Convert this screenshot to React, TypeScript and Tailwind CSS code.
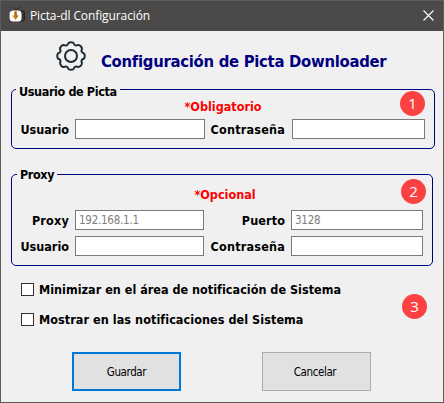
import type { ReactNode } from "react";

const tahoma = "font-['DejaVu_Sans_Condensed','DejaVu_Sans',sans-serif]";

function AppIcon() {
  return (
    <svg width="16" height="16" viewBox="0 0 16 16" className="-mt-1 shrink-0">
      <path d="M4 1 7.3 4 11 .7" fill="none" stroke="#292929" strokeWidth="1" />
      <rect x="1" y="4.5" width="15" height="11" rx="2" fill="#242424" />
      <rect x=".6" y="4.5" width="12" height="11" rx="3.5" fill="#fff" />
      <path d="M5 5.5h3v4h2l-3.5 4.5L3 9.5h2z" fill="#d99a31" />
      <path d="M6 5.5h1.5v4H9L6.5 13z" fill="#b65420" />
      <path d="M14 6.500v1M14 9.500v1M14 12.500v1" stroke="#777" />
    </svg>
  );
}

function Gear() {
  return (
    <svg width="30" height="30" viewBox="-15 -15 30 30" fill="none" stroke="#1e2b35" strokeWidth="2" strokeLinejoin="round" className="shrink-0">
      <circle r="6" />
      <path d="M-3-12.2Q-2.5-13.8 0-13.8T3-12.2Q4-9.7 6.5-10.8Q8.2-11.5 9.8-9.8T10.8-6.5Q9.7-4 12.2-3Q13.8-2.5 13.8 0T12.2 3Q9.7 4 10.8 6.5Q11.5 8.2 9.8 9.8T6.5 10.8Q4 9.7 3 12.2Q2.5 13.8 0 13.8T-3 12.2Q-4 9.7-6.5 10.8Q-8.2 11.5-9.8 9.8T-10.8 6.5Q-9.7 4-12.2 3Q-13.8 2.5-13.8 0T-12.2-3Q-9.7-4-10.8-6.5Q-11.5-8.2-9.8-9.8T-6.5-10.8Q-4-9.7-3-12.2Z" />
    </svg>
  );
}

function Badge({ children, className }: { children: ReactNode; className: string }) {
  return (
    <span className={`absolute flex size-[25px] items-center justify-center rounded-full bg-[#fb4141] font-['Open_Sans',sans-serif] text-[15px] font-normal leading-none text-white ${className}`}>
      {children}
    </span>
  );
}

function Field({ label, placeholder, labelClass, width }: { label: string; placeholder?: string; labelClass: string; width: string }) {
  return (
    <label className="flex items-center gap-1.5">
      <span className={`mt-px flex justify-end whitespace-nowrap ${labelClass}`}>{label}</span>
      <input
        placeholder={placeholder}
        className={`h-5 border border-[#7a7a7a] bg-white px-[3px] text-[11.5px] font-normal tracking-[-0.25px] outline-none placeholder:text-[#808080] ${width}`}
      />
    </label>
  );
}

function Check({ label, tracking }: { label: string; tracking: string }) {
  return (
    <label className="flex h-[30px] items-center gap-[5px]">
      <input type="checkbox" className="size-[13px] appearance-none border border-[#333] bg-white" />
      <span className={`mt-0.5 whitespace-nowrap ${tracking}`}>{label}</span>
    </label>
  );
}

export default function App() {
  return (
    <div className={`relative flex h-[403px] w-[444px] flex-col overflow-hidden border border-[#5d5c5b] bg-[#f0f0f0] text-[12.5px] font-bold leading-4 text-black ${tahoma}`}>
      <header className="flex h-[30px] shrink-0 items-center bg-[#4b4a48] pl-2 pr-[9px] font-['Open_Sans',sans-serif] text-[12px] font-normal text-white">
        <AppIcon />
        <span className="ml-[5px] grow tracking-[-0.1px]">Picta-dl Configuración</span>
        <svg width="11" height="11" viewBox="0 0 11 11" stroke="#fff" strokeWidth="1.1" className="-mt-0.5">
          <path d="m.5.5 10 10m0-10-10 10" />
        </svg>
      </header>

      <div className="flex h-[51px] shrink-0 items-start pl-[55px] pt-[10px]">
        <Gear />
        <h1 className="ml-[15px] mt-[11px] whitespace-nowrap text-[16.5px] leading-5 tracking-[-0.28px] text-[#000080]">Configuración de Picta Downloader</h1>
      </div>

      <fieldset className="ml-[10px] h-[67px] w-[424px] shrink-0 rounded-[5px] border border-[#000080] pl-[9px]">
        <legend className="-ml-[5px] h-[15px] px-[3px] pt-[2px] leading-[15px] tracking-[-0.38px]">Usuario de Picta</legend>
        <p className="mt-0.5 w-[404px] text-center text-[#ff0000]">*Obligatorio</p>
        <div className="mt-1 flex gap-1.5">
          <Field label="Usuario" labelClass="w-[48px]" width="w-[130px]" />
          <Field label="Contraseña" labelClass="w-[74px] mr-px tracking-[0.2px]" width="w-[133px]" />
        </div>
      </fieldset>

      <fieldset className="ml-[10px] mt-[18px] h-[99px] w-[422px] shrink-0 rounded-[5px] border border-[#000080] pl-[9px]">
        <legend className="-ml-[4px] h-[15px] px-[3px] leading-[15px] tracking-[-0.38px]">Proxy</legend>
        <p className="mt-[5px] w-[408px] text-center text-[#ff0000]">*Opcional</p>
        <div className="mt-[7px] grid grid-cols-[183px_213px] gap-x-1.5 gap-y-1.5">
          <Field label="Proxy" placeholder="192.168.1.1" labelClass="w-[48px] tracking-[0.2px]" width="w-[129px]" />
          <Field label="Puerto" placeholder="3128" labelClass="w-[75px] tracking-[0.1px]" width="w-[132px]" />
          <Field label="Usuario" labelClass="w-[48px]" width="w-[129px]" />
          <Field label="Contraseña" labelClass="w-[75px] tracking-[0.2px]" width="w-[132px]" />
        </div>
      </fieldset>

      <div className="mt-[8px] flex flex-col pl-5">
        <Check label="Minimizar en el área de notificación de Sistema" tracking="tracking-[0.01px]" />
        <Check label="Mostrar en las notificaciones del Sistema" tracking="tracking-[0.06px]" />
      </div>

      <div className="mt-[18px] flex gap-[81px] pl-[71px] text-[11.5px] font-normal tracking-[-0.4px]">
        <button className="h-[39px] w-[109px] border-2 border-[#0078d7] bg-[#e1e1e1]">Guardar</button>
        <button className="h-[39px] w-[109px] border border-[#adadad] bg-[#e1e1e1] pr-[3px]">Cancelar</button>
      </div>

      <Badge className="left-[399px] top-[90px]">1</Badge>
      <Badge className="left-[400px] top-[178px]">2</Badge>
      <Badge className="left-[401px] top-[293px]">3</Badge>
    </div>
  );
}
